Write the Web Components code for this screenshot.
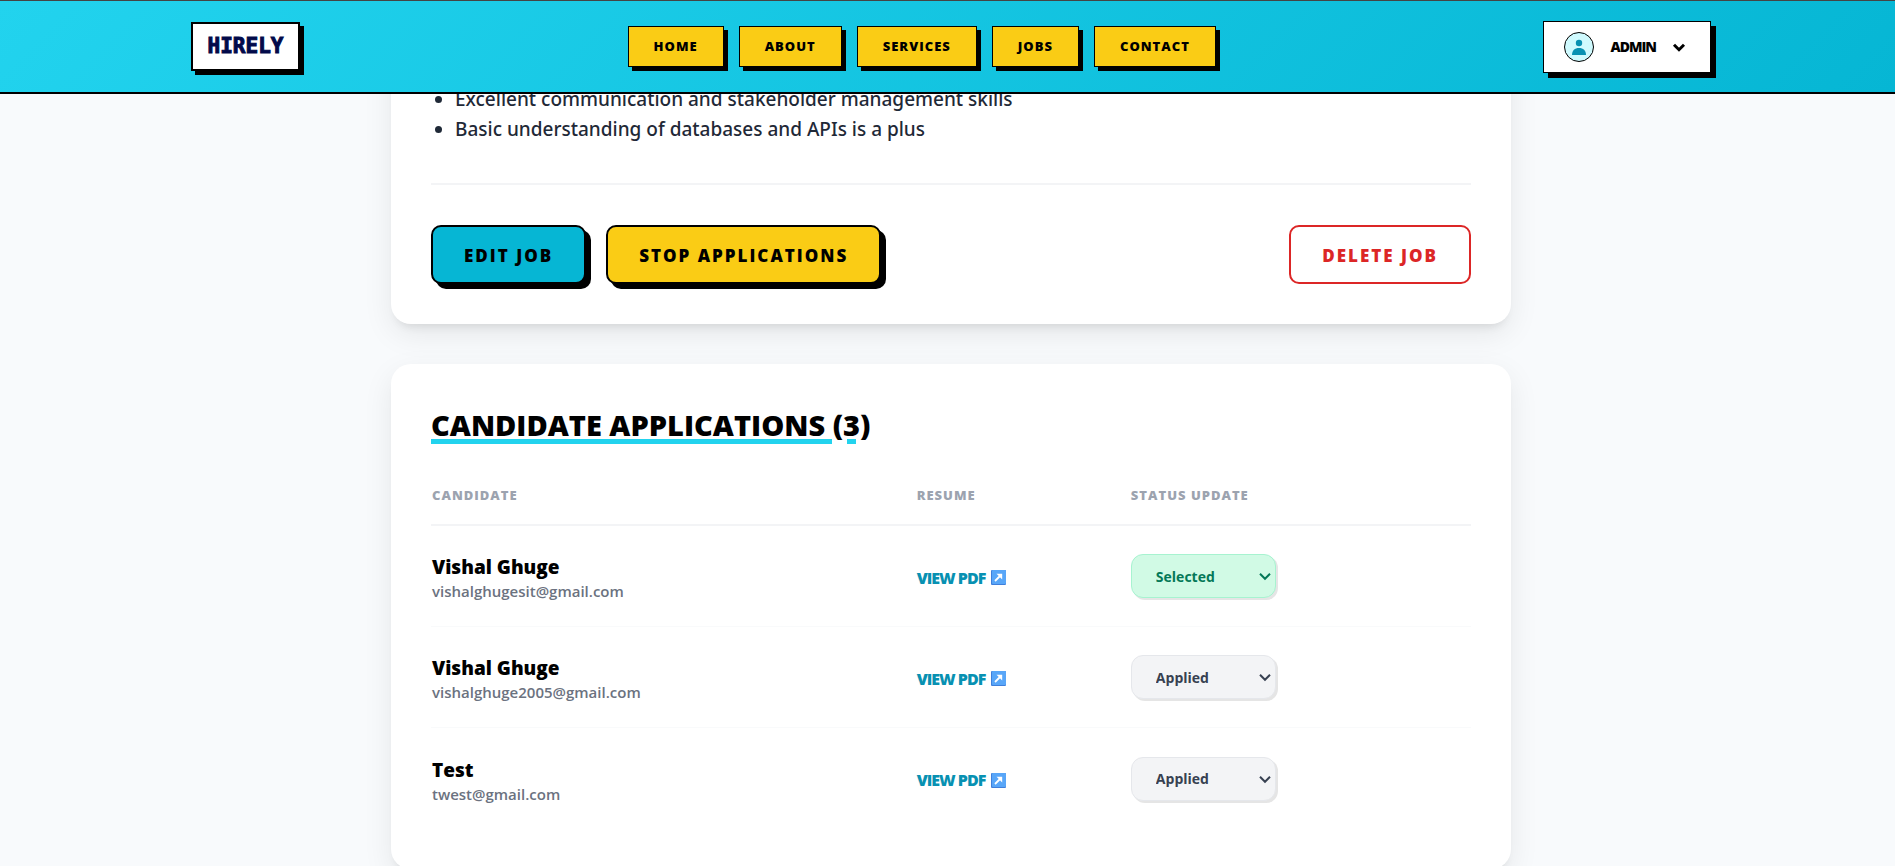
<!DOCTYPE html>
<html lang="en">
<head>
<meta charset="UTF-8">
<meta name="viewport" content="width=device-width, initial-scale=1.0">
<title>Hirely - Manage Job</title>
<style>
    :root {
        --cyan: #06b6d4;
        --cyan-light: #22d3ee;
        --yellow: #facc15;
        --gutter: 7px;
    }

    html {
        scrollbar-width: none;
    }

    body {
        margin: 0;
        background: #f8fafc;
        color: #000;
        font-family: "Open Sans", "Noto Sans", sans-serif;
    }

    main {
        display: flex;
        flex-direction: column;
        gap: 40px;
        max-width: 1120px;
        margin: 0 auto;
        padding: 44px 0 40px var(--gutter);
    }
</style>
</head>
<body>

<site-header>
    <nav-link href="#home">HOME</nav-link>
    <nav-link href="#about">ABOUT</nav-link>
    <nav-link href="#services">SERVICES</nav-link>
    <nav-link href="#jobs">JOBS</nav-link>
    <nav-link href="#contact">CONTACT</nav-link>
    <user-menu slot="user">ADMIN</user-menu>
</site-header>

<main>
    <panel-card>
        <job-details></job-details>
    </panel-card>
    <panel-card>
        <candidate-list></candidate-list>
    </panel-card>
</main>

<script>
class SiteHeader extends HTMLElement {
    constructor() {
        super();
        const shadow = this.attachShadow({ mode: 'open' });
        shadow.innerHTML = `
        <style>
            :host {
                display: block;
                position: fixed;
                top: 0;
                left: 0;
                right: 0;
                z-index: 10;
            }
            header {
                box-sizing: border-box;
                height: 94px;
                padding-left: var(--gutter);
                border-top: 1px solid #444;
                border-bottom: 2px solid #000;
                background: linear-gradient(135deg, var(--cyan-light), var(--cyan));
            }
            .content {
                display: flex;
                justify-content: space-between;
                align-items: center;
                max-width: 1520px;
                height: 100%;
                margin: 0 auto;
            }
            .logo {
                box-sizing: border-box;
                width: 109px;
                height: 49px;
                border: 2px solid #000;
                background: #fff;
                box-shadow: 4px 4px 0 #000;
                color: #020a4a;
                font: bold 21px/45px "DejaVu Sans Mono", monospace;
                -webkit-text-stroke: 1px #020a4a;
                text-align: center;
                text-decoration: none;
            }
            nav {
                display: flex;
                gap: 15px;
            }
        </style>
        <header>
            <div class="content">
                <a class="logo" href="#home">HIRELY</a>
                <nav><slot></slot></nav>
                <slot name="user"></slot>
            </div>
        </header>
        `;
    }
}

class NavLink extends HTMLElement {
    constructor() {
        super();
        const shadow = this.attachShadow({ mode: 'open' });
        shadow.innerHTML = `
        <style>
            :host { display: block; }
            a {
                display: block;
                padding: 10px 25px;
                border: 1px solid #000;
                background: var(--yellow);
                box-shadow: 4px 4px 0 #000;
                color: #000;
                font-size: 13px;
                font-weight: 800;
                line-height: 19px;
                letter-spacing: 1px;
                text-decoration: none;
            }
        </style>
        <a href="${this.getAttribute('href') || '#'}"><slot></slot></a>
        `;
    }
}

class UserMenu extends HTMLElement {
    constructor() {
        super();
        const shadow = this.attachShadow({ mode: 'open' });
        shadow.innerHTML = `
        <style>
            :host { display: block; }
            button {
                display: flex;
                align-items: center;
                gap: 16px;
                padding: 10px 20px;
                border: 1px solid #000;
                background: #fff;
                box-shadow: 5px 5px 0 #000;
                color: #000;
                font-family: inherit;
                font-size: 14px;
                font-weight: 800;
                line-height: 20px;
                letter-spacing: -1px;
                cursor: pointer;
            }
            .chevron { margin-right: 4px; }
        </style>
        <button type="button" aria-haspopup="true">
            <svg width="30" height="30" viewBox="0 0 30 30" aria-hidden="true">
                <circle cx="15" cy="15" r="14.5" fill="#cffafe" stroke="#000"/>
                <circle cx="15" cy="11" r="3.2" fill="#0891b2"/>
                <path d="M8 23c0-4.600 2.800-7 7-7s7 2.400 7 7z" fill="#0891b2"/>
            </svg>
            <slot></slot>
            <svg class="chevron" width="14" height="14" viewBox="0 0 14 14" aria-hidden="true">
                <path d="M2 4.700l5 5 5-5" fill="none" stroke="#000" stroke-width="3"/>
            </svg>
        </button>
        `;
    }
}

class PanelCard extends HTMLElement {
    constructor() {
        super();
        const shadow = this.attachShadow({ mode: 'open' });
        shadow.innerHTML = `
        <style>
            :host {
                display: block;
                padding: 40px;
                border-radius: 20px;
                background: #fff;
                box-shadow: 0 10px 30px rgba(0, 0, 0, 0.08), 0 8px 10px -6px rgba(0, 0, 0, 0.1);
            }
        </style>
        <slot></slot>
        `;
    }
}

class ActionButton extends HTMLElement {
    constructor() {
        super();
        const shadow = this.attachShadow({ mode: 'open' });
        shadow.innerHTML = `
        <style>
            :host { display: block; }
            button {
                padding: 15px 31px 13px;
                border: 2px solid #000;
                border-radius: 10px;
                background: var(--cyan);
                box-shadow: 5px 5px 0 #000;
                color: #000;
                font-family: inherit;
                font-size: 17px;
                font-weight: 800;
                line-height: 27px;
                letter-spacing: 2px;
                cursor: pointer;
            }
            :host([kind="warning"]) button { background: var(--yellow); }
            :host([kind="danger"]) button {
                border-color: #dc2626;
                background: #fff;
                box-shadow: none;
                color: #dc2626;
            }
        </style>
        <button type="button"><slot></slot></button>
        `;
    }
}

class JobDetails extends HTMLElement {
    constructor() {
        super();
        const shadow = this.attachShadow({ mode: 'open' });
        shadow.innerHTML = `
        <style>
            :host { display: block; }
            ul {
                margin: 0;
                padding: 0 0 39px 24px;
                border-bottom: 2px solid #f3f4f6;
                color: #1f2937;
                font-family: "Noto Sans", sans-serif;
                font-size: 19px;
                font-weight: 500;
                line-height: 30px;
            }
            .actions {
                display: flex;
                gap: 20px;
                padding-top: 40px;
            }
            .danger { margin-left: auto; }
        </style>
        <ul>
            <li>Excellent communication and stakeholder management skills</li>
            <li>Basic understanding of databases and APIs is a plus</li>
        </ul>
        <div class="actions">
            <action-button>EDIT JOB</action-button>
            <action-button kind="warning">STOP APPLICATIONS</action-button>
            <action-button kind="danger" class="danger">DELETE JOB</action-button>
        </div>
        `;
    }
}

class StatusSelect extends HTMLElement {
    constructor() {
        super();
        const value = this.getAttribute('value');
        const options = ['Applied', 'Shortlisted', 'Selected', 'Rejected'];
        const shadow = this.attachShadow({ mode: 'open' });
        shadow.innerHTML = `
        <style>
            :host {
                display: grid;
                grid-template-columns: 145px;
                align-items: center;
                color: #374151;
            }
            :host([value="Selected"]) { color: #047857; }
            select, svg { grid-area: 1 / 1; }
            select {
                appearance: none;
                height: 44px;
                padding: 0 24px;
                border: 1px solid #e5e7eb;
                border-radius: 12px;
                background: #f3f4f6;
                box-shadow: 2px 2px 0 #e5e5e5;
                color: inherit;
                font-family: inherit;
                font-size: 14px;
                font-weight: 700;
            }
            :host([value="Selected"]) select {
                border-color: #a7f3d0;
                background: #d1fae5;
            }
            svg {
                justify-self: end;
                margin-right: 5px;
                pointer-events: none;
            }
        </style>
        <select aria-label="Status update">
            ${options.map(o => `<option${o === value ? ' selected' : ''}>${o}</option>`).join('')}
        </select>
        <svg width="12" height="12" viewBox="0 0 12 12" aria-hidden="true">
            <path d="M1 3.800l5 5 5-5" fill="none" stroke="currentColor" stroke-width="2"/>
        </svg>
        `;
    }
}

class ResumeLink extends HTMLElement {
    constructor() {
        super();
        const shadow = this.attachShadow({ mode: 'open' });
        shadow.innerHTML = `
        <style>
            :host {
                display: block;
                padding-top: 3px;
            }
            a {
                display: inline-flex;
                align-items: center;
                gap: 6px;
                color: #0891b2;
                font-size: 16px;
                font-weight: 800;
                line-height: 20px;
                letter-spacing: -1px;
                text-decoration: none;
            }
        </style>
        <a href="#resume">
            <slot></slot>
            <svg width="15" height="15" viewBox="0 0 15 15" aria-hidden="true">
                <rect width="15" height="15" rx="1" fill="#3f7fdb"/>
                <rect x="1" width="14" height="14" rx="1" fill="#58a6f8"/>
                <path d="M4 11l5-5" fill="none" stroke="#fff" stroke-width="1.800"/>
                <path d="M5.500 3.800h5.700v5.700z" fill="#fff"/>
            </svg>
        </a>
        `;
    }
}

class CandidateList extends HTMLElement {
    constructor() {
        super();
        const candidates = [
            { name: 'Vishal Ghuge', email: 'vishalghugesit@gmail.com', status: 'Selected' },
            { name: 'Vishal Ghuge', email: 'vishalghuge2005@gmail.com', status: 'Applied' },
            { name: 'Test', email: 'twest@gmail.com', status: 'Applied' }
        ];
        const shadow = this.attachShadow({ mode: 'open' });
        shadow.innerHTML = `
        <style>
            :host { display: block; }
            h2 {
                margin: 0 0 39px;
                font-size: 29px;
                font-weight: 800;
                line-height: 42px;
                text-decoration: underline 5px var(--cyan-light);
                text-underline-offset: 3px;
            }
            table {
                width: 100%;
                table-layout: fixed;
                border-collapse: separate;
                border-spacing: 0;
            }
            th {
                box-sizing: border-box;
                height: 41px;
                padding: 0 1px;
                border-bottom: 2px solid #f3f4f6;
                color: #9ca3af;
                font-size: 13px;
                font-weight: 800;
                line-height: 20px;
                letter-spacing: 1px;
                text-align: left;
                vertical-align: top;
            }
            th:nth-child(1) { width: 46.600%; }
            th:nth-child(2) { width: 20.600%; }
            td {
                box-sizing: border-box;
                height: 101px;
                padding: 0 1px;
                border-bottom: 1px solid #f9fafb;
            }
            tr:last-child td { border-bottom: 0; }
            .name {
                padding-top: 2px;
                font-size: 19px;
                font-weight: 800;
                line-height: 28px;
            }
            .email {
                color: #6b7280;
                font-size: 15px;
                font-weight: 600;
                line-height: 20px;
            }
        </style>
        <h2>CANDIDATE APPLICATIONS (3)</h2>
        <table>
            <thead>
                <tr><th>CANDIDATE</th><th>RESUME</th><th>STATUS UPDATE</th></tr>
            </thead>
            <tbody>
                ${candidates.map(c => `
                <tr>
                    <td>
                        <div class="name">${c.name}</div>
                        <div class="email">${c.email}</div>
                    </td>
                    <td><resume-link>VIEW PDF</resume-link></td>
                    <td><status-select value="${c.status}"></status-select></td>
                </tr>`).join('')}
            </tbody>
        </table>
        `;
    }
}

customElements.define('site-header', SiteHeader);
customElements.define('nav-link', NavLink);
customElements.define('user-menu', UserMenu);
customElements.define('panel-card', PanelCard);
customElements.define('action-button', ActionButton);
customElements.define('job-details', JobDetails);
customElements.define('status-select', StatusSelect);
customElements.define('resume-link', ResumeLink);
customElements.define('candidate-list', CandidateList);
</script>
</body>
</html>
